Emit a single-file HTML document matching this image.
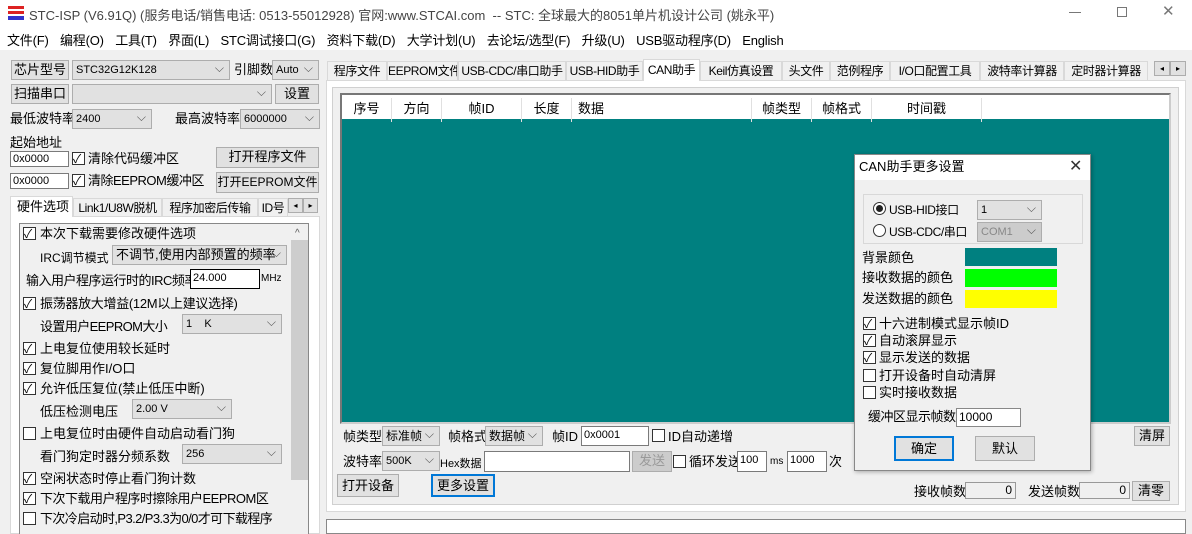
<!DOCTYPE html><html><head><meta charset="utf-8"><style>
*{box-sizing:border-box;margin:0;padding:0}
body{width:1192px;height:534px;overflow:hidden;background:#f0f0f0;position:relative;font:12px "Liberation Sans","Noto Sans CJK SC",sans-serif;color:#000;white-space:nowrap}
.a{position:absolute;white-space:nowrap}
.btn{position:absolute;background:#e1e1e1;border:1px solid #adadad;text-align:center;font-size:13px;line-height:18px;overflow:hidden}
.cb{position:absolute;background:#e1e1e1;border:1px solid #adadad;padding-left:3px;font-size:11px;line-height:18px;overflow:hidden}
.cb:after{content:"⌵";position:absolute;right:5px;top:-2px;color:#555;font-size:12px}
.ed{position:absolute;background:#fff;border:1px solid #7a7a7a;padding-left:2px;font-size:11px;line-height:17px;overflow:hidden}
.ck{position:absolute;width:13px;height:13px;border:1px solid #333;background:#fff}
.ck.on:after{content:"✓";position:absolute;left:0;top:-3px;font-size:12px}
.t{font-size:13px;line-height:16px}
.tab{position:absolute;top:61px;height:19px;border:1px solid #d9d9d9;border-bottom:none;background:#f0f0f0;font-size:12px;line-height:18px;text-align:center;overflow:hidden;letter-spacing:-0.4px}
</style></head><body>
<div class="a" style="left:0;top:0;width:1192px;height:50px;background:#fff"></div>
<div class="a" style="left:8px;top:6px;width:16px;height:14px;background:linear-gradient(#d22 0 3px,#fff 3px 5px,#d22 5px 8px,#fff 8px 10px,#33c 10px)"></div>
<div class="a" style="left:29px;top:5px;font-size:13px;color:#444">STC-ISP (V6.91Q) (服务电话/销售电话: 0513-55012928) 官网:www.STCAI.com&nbsp; -- STC: 全球最大的8051单片机设计公司 (姚永平)</div>
<div class="a" style="left:1069px;top:12px;width:12px;border-top:1px solid #777"></div>
<div class="a" style="left:1117px;top:7px;width:10px;height:10px;border:1px solid #777"></div>
<div class="a" style="left:1162px;top:2px;font-size:15px;color:#777">✕</div>
<div class="a" style="left:7px;top:30px;font-size:13px;word-spacing:8px;letter-spacing:-0.2px">文件(F) 编程(O) 工具(T) 界面(L) STC调试接口(G) 资料下载(D) 大学计划(U) 去论坛/选型(F) 升级(U) USB驱动程序(D) English</div>

<div class="btn" style="left:11px;top:60px;width:58px;height:20px">芯片型号</div>
<div class="cb" style="left:72px;top:60px;width:158px;height:20px">STC32G12K128</div>
<div class="a t" style="left:234px;top:62px">引脚数</div>
<div class="cb" style="left:272px;top:60px;width:47px;height:20px">Auto</div>
<div class="btn" style="left:11px;top:84px;width:58px;height:20px">扫描串口</div>
<div class="cb" style="left:72px;top:84px;width:200px;height:20px"></div>
<div class="btn" style="left:275px;top:84px;width:44px;height:20px">设置</div>
<div class="a t" style="left:10px;top:111px">最低波特率</div>
<div class="cb" style="left:72px;top:109px;width:80px;height:20px">2400</div>
<div class="a t" style="left:175px;top:111px">最高波特率</div>
<div class="cb" style="left:240px;top:109px;width:80px;height:20px">6000000</div>
<div class="a t" style="left:10px;top:135px">起始地址</div>
<div class="ed" style="left:10px;top:151px;width:59px;height:16px;line-height:14px">0x0000</div>
<div class="ck on" style="left:72px;top:152px"></div><div class="a t" style="left:88px;top:151px">清除代码缓冲区</div>
<div class="btn" style="left:216px;top:147px;width:103px;height:21px">打开程序文件</div>
<div class="ed" style="left:10px;top:173px;width:59px;height:16px;line-height:14px">0x0000</div>
<div class="ck on" style="left:72px;top:174px"></div><div class="a t" style="left:88px;top:173px;letter-spacing:-0.5px">清除EEPROM缓冲区</div>
<div class="btn" style="left:216px;top:172px;width:103px;height:21px;font-size:12px">打开EEPROM文件</div>

<div class="a" style="left:10px;top:216px;width:310px;height:318px;border:1px solid #d9d9d9;background:#fff"></div>
<div class="a" style="left:10px;top:196px;width:63px;height:21px;background:#fff;border:1px solid #d9d9d9;border-bottom:none;padding:2px 6px;font-size:13px;line-height:16px">硬件选项</div>
<div class="tab" style="left:73px;top:198px;width:89px;height:18px">Link1/U8W脱机</div>
<div class="tab" style="left:162px;top:198px;width:96px;height:18px">程序加密后传输</div>
<div class="tab" style="left:258px;top:198px;width:30px;height:18px">ID号</div>
<div class="btn" style="left:288px;top:198px;width:15px;height:15px;font-size:8px;line-height:13px">◂</div><div class="btn" style="left:303px;top:198px;width:15px;height:15px;font-size:8px;line-height:13px">▸</div>
<div class="a" style="left:19px;top:223px;width:290px;height:311px;border:1px solid #888;border-bottom:none;background:#f0f0f0"></div>
<div class="a" style="left:291px;top:225px;width:17px;height:309px;background:#f0f0f0"></div>
<div class="a" style="left:291px;top:240px;width:17px;height:240px;background:#cdcdcd"></div>
<div class="a" style="left:295px;top:228px;font-size:10px;color:#555">^</div>
<div class="ck on" style="left:23px;top:227px"></div><div class="a t" style="left:40px;top:226px">本次下载需要修改硬件选项</div>
<div class="a" style="left:40px;top:249px">IRC调节模式</div>
<div class="cb" style="left:112px;top:245px;width:175px;height:20px;font-size:13px">不调节,使用内部预置的频率</div>
<div class="a t" style="left:26px;top:273px;letter-spacing:-0.5px">输入用户程序运行时的IRC频率</div>
<div class="ed" style="left:190px;top:269px;width:70px;height:20px;border-color:#000">24.000</div>
<div class="a" style="left:261px;top:273px;font-size:10px">MHz</div>
<div class="ck on" style="left:23px;top:297px"></div><div class="a t" style="left:40px;top:296px;letter-spacing:-0.3px">振荡器放大增益(12M以上建议选择)</div>
<div class="a t" style="left:40px;top:319px;letter-spacing:-0.6px">设置用户EEPROM大小</div>
<div class="cb" style="left:182px;top:314px;width:100px;height:20px">1 &nbsp; &nbsp;K</div>
<div class="ck on" style="left:23px;top:342px"></div><div class="a t" style="left:40px;top:341px">上电复位使用较长延时</div>
<div class="ck on" style="left:23px;top:362px"></div><div class="a t" style="left:40px;top:361px">复位脚用作I/O口</div>
<div class="ck on" style="left:23px;top:382px"></div><div class="a t" style="left:40px;top:381px">允许低压复位(禁止低压中断)</div>
<div class="a t" style="left:40px;top:404px">低压检测电压</div>
<div class="cb" style="left:132px;top:399px;width:100px;height:20px">2.00 V</div>
<div class="ck" style="left:23px;top:427px"></div><div class="a t" style="left:40px;top:426px">上电复位时由硬件自动启动看门狗</div>
<div class="a t" style="left:40px;top:449px">看门狗定时器分频系数</div>
<div class="cb" style="left:182px;top:444px;width:100px;height:20px">256</div>
<div class="ck on" style="left:23px;top:472px"></div><div class="a t" style="left:40px;top:471px">空闲状态时停止看门狗计数</div>
<div class="ck on" style="left:23px;top:492px"></div><div class="a t" style="left:40px;top:491px;letter-spacing:-0.5px">下次下载用户程序时擦除用户EEPROM区</div>
<div class="ck" style="left:23px;top:512px"></div><div class="a t" style="left:40px;top:511px;letter-spacing:-0.6px">下次冷启动时,P3.2/P3.3为0/0才可下载程序</div>

<!-- right -->
<div class="a" style="left:326px;top:80px;width:860px;height:432px;background:#fff;border:1px solid #d9d9d9"></div>
<div class="tab" style="left:327px;width:60px">程序文件</div>
<div class="tab" style="left:387px;width:71px">EEPROM文件</div>
<div class="tab" style="left:458px;width:108px">USB-CDC/串口助手</div>
<div class="tab" style="left:566px;width:77px">USB-HID助手</div>
<div class="a" style="left:643px;top:59px;height:22px;width:57px;background:#fff;border:1px solid #d9d9d9;border-bottom:none;text-align:center;line-height:20px;letter-spacing:-0.4px">CAN助手</div>
<div class="tab" style="left:700px;width:82px">Keil仿真设置</div>
<div class="tab" style="left:782px;width:48px">头文件</div>
<div class="tab" style="left:830px;width:60px">范例程序</div>
<div class="tab" style="left:890px;width:90px">I/O口配置工具</div>
<div class="tab" style="left:980px;width:84px">波特率计算器</div>
<div class="tab" style="left:1064px;width:84px">定时器计算器</div>
<div class="btn" style="left:1154px;top:61px;width:16px;height:15px;font-size:8px;line-height:13px">◂</div><div class="btn" style="left:1170px;top:61px;width:16px;height:15px;font-size:8px;line-height:13px">▸</div>
<div class="a" style="left:332px;top:87px;width:847px;height:418px;background:#f0f0f0;border:1px solid #d0d0d0"></div>
<div class="a" style="left:340px;top:93px;width:831px;height:331px;border:2px solid #777;border-right-color:#ccc;border-bottom-color:#ccc;background:#008080"></div>
<div class="a" style="left:342px;top:95px;width:827px;height:24px;background:#fff;font-size:13px">
<span class="a" style="left:0;width:50px;height:24px;border-right:1px solid #e0e0e0;text-align:center;top:3px">序号</span>
<span class="a" style="left:50px;width:50px;height:24px;border-right:1px solid #e0e0e0;text-align:center;top:3px">方向</span>
<span class="a" style="left:100px;width:80px;height:24px;border-right:1px solid #e0e0e0;text-align:center;top:3px">帧ID</span>
<span class="a" style="left:180px;width:50px;height:24px;border-right:1px solid #e0e0e0;text-align:center;top:3px">长度</span>
<span class="a" style="left:230px;width:180px;height:24px;border-right:1px solid #e0e0e0;padding-left:6px;top:3px">数据</span>
<span class="a" style="left:410px;width:60px;height:24px;border-right:1px solid #e0e0e0;text-align:center;top:3px">帧类型</span>
<span class="a" style="left:470px;width:60px;height:24px;border-right:1px solid #e0e0e0;text-align:center;top:3px">帧格式</span>
<span class="a" style="left:530px;width:110px;height:24px;border-right:1px solid #e0e0e0;text-align:center;top:3px">时间戳</span>
</div>
<div class="a t" style="left:343px;top:429px">帧类型</div>
<div class="cb" style="left:382px;top:426px;width:58px;height:20px;font-size:12px">标准帧</div>
<div class="a t" style="left:448px;top:429px">帧格式</div>
<div class="cb" style="left:485px;top:426px;width:58px;height:20px;font-size:12px">数据帧</div>
<div class="a t" style="left:552px;top:429px">帧ID</div>
<div class="ed" style="left:581px;top:426px;width:68px;height:20px">0x0001</div>
<div class="ck" style="left:652px;top:429px"></div><div class="a t" style="left:668px;top:429px">ID自动递增</div>
<div class="btn" style="left:1134px;top:426px;width:36px;height:20px">清屏</div>
<div class="a t" style="left:343px;top:454px">波特率</div>
<div class="cb" style="left:382px;top:451px;width:58px;height:20px">500K</div>
<div class="a" style="left:440px;top:455px;font-size:11px">Hex数据</div>
<div class="ed" style="left:484px;top:451px;width:146px;height:21px"></div>
<div class="btn" style="left:632px;top:451px;width:40px;height:21px;color:#999;background:#ccc">发送</div>
<div class="ck" style="left:673px;top:455px"></div><div class="a t" style="left:689px;top:454px">循环发送</div>
<div class="ed" style="left:737px;top:451px;width:30px;height:21px">100</div>
<div class="a" style="left:770px;top:456px;font-size:10px">ms</div>
<div class="ed" style="left:787px;top:451px;width:40px;height:21px">1000</div>
<div class="a t" style="left:829px;top:454px">次</div>
<div class="btn" style="left:337px;top:474px;width:62px;height:23px;line-height:21px">打开设备</div>
<div class="btn" style="left:431px;top:474px;width:64px;height:23px;border:2px solid #0078d7;line-height:19px">更多设置</div>
<div class="a t" style="left:914px;top:484px">接收帧数</div>
<div class="a" style="left:965px;top:482px;width:51px;height:17px;border:1px solid #999;text-align:right;padding-right:3px;line-height:15px">0</div>
<div class="a t" style="left:1028px;top:484px">发送帧数</div>
<div class="a" style="left:1079px;top:482px;width:51px;height:17px;border:1px solid #999;text-align:right;padding-right:3px;line-height:15px">0</div>
<div class="btn" style="left:1132px;top:481px;width:38px;height:20px">清零</div>
<div class="a" style="left:326px;top:519px;width:860px;height:15px;background:#fff;border:1px solid #888"></div>

<!-- dialog -->
<div class="a" style="left:854px;top:154px;width:237px;height:317px;background:#f0f0f0;border:1px solid #888;box-shadow:1px 1px 4px rgba(0,0,0,.3)"></div>
<div class="a" style="left:855px;top:155px;width:235px;height:25px;background:#fff"></div>
<div class="a t" style="left:859px;top:159px">CAN助手更多设置</div>
<div class="a" style="left:1069px;top:156px;font-size:16px;color:#333">✕</div>
<div class="a" style="left:863px;top:194px;width:220px;height:50px;border:1px solid #d8d8d8"></div>
<div class="a" style="left:873px;top:202px;width:13px;height:13px;border:1px solid #333;border-radius:50%;background:#fff"><div style="margin:2px;width:7px;height:7px;border-radius:50%;background:#222"></div></div>
<div class="a" style="left:889px;top:201px;font-size:12px;letter-spacing:-0.4px">USB-HID接口</div>
<div class="cb" style="left:977px;top:200px;width:65px;height:20px">1</div>
<div class="a" style="left:873px;top:224px;width:13px;height:13px;border:1px solid #333;border-radius:50%;background:#fff"></div>
<div class="a" style="left:889px;top:223px;font-size:12px;letter-spacing:-0.4px">USB-CDC/串口</div>
<div class="cb" style="left:977px;top:222px;width:65px;height:20px;background:#ccc;color:#888">COM1</div>
<div class="a t" style="left:862px;top:250px">背景颜色</div><div class="a" style="left:965px;top:248px;width:92px;height:18px;background:#008080"></div>
<div class="a t" style="left:862px;top:270px">接收数据的颜色</div><div class="a" style="left:965px;top:269px;width:92px;height:18px;background:#0f0"></div>
<div class="a t" style="left:862px;top:291px">发送数据的颜色</div><div class="a" style="left:965px;top:290px;width:92px;height:18px;background:#ff0"></div>
<div class="ck on" style="left:863px;top:317px"></div><div class="a t" style="left:879px;top:316px">十六进制模式显示帧ID</div>
<div class="ck on" style="left:863px;top:334px"></div><div class="a t" style="left:879px;top:333px">自动滚屏显示</div>
<div class="ck on" style="left:863px;top:351px"></div><div class="a t" style="left:879px;top:350px">显示发送的数据</div>
<div class="ck" style="left:863px;top:369px"></div><div class="a t" style="left:879px;top:368px">打开设备时自动清屏</div>
<div class="ck" style="left:863px;top:386px"></div><div class="a t" style="left:879px;top:385px">实时接收数据</div>
<div class="a t" style="left:868px;top:409px;letter-spacing:-0.5px">缓冲区显示帧数</div>
<div class="ed" style="left:956px;top:408px;width:65px;height:19px;border-color:#888;font-size:12px">10000</div>
<div class="btn" style="left:894px;top:436px;width:60px;height:25px;border:2px solid #0078d7;line-height:21px">确定</div>
<div class="btn" style="left:975px;top:436px;width:60px;height:25px;line-height:23px">默认</div>
</body></html>
